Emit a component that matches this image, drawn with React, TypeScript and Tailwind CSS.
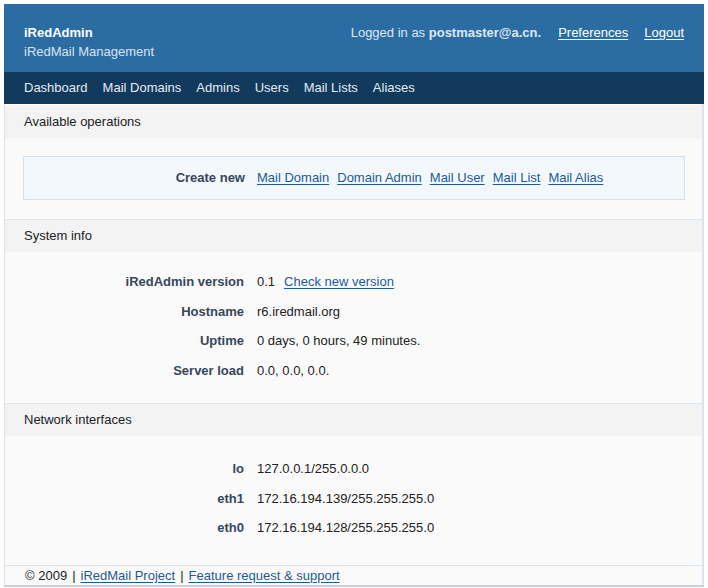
import React from 'react';

const NAV = ['Dashboard', 'Mail Domains', 'Admins', 'Users', 'Mail Lists', 'Aliases'];

const CREATE = ['Mail Domain', 'Domain Admin', 'Mail User', 'Mail List', 'Mail Alias'];

const NETS = [
  { name: 'lo', addr: '127.0.0.1/255.0.0.0' },
  { name: 'eth1', addr: '172.16.194.139/255.255.255.0' },
  { name: 'eth0', addr: '172.16.194.128/255.255.255.0' },
];

function Link({ children }: { children: React.ReactNode }) {
  return <a href="#" className="text-[#1b5a98] underline underline-offset-2">{children}</a>;
}

function Bar({ title, h }: { title: string; h: string }) {
  return (
    <div className={`${h} flex items-center bg-[#f3f3f3] pl-[19px] text-[#222]`}>{title}</div>
  );
}

function Row({ label, children }: { label: string; children: React.ReactNode }) {
  return (
    <div className="flex h-[29.5px] items-center">
      <div className="w-[239px] text-right font-bold text-[#36475a]">{label}</div>
      <div className="pl-[13px] text-[#222]">{children}</div>
    </div>
  );
}

export default function App() {
  return (
    <div className="h-[588px] w-[708px] bg-white pl-[4px] pt-[4px] text-[13px] font-['Liberation_Sans',Arial,sans-serif]">
      <div className="w-[700px]">
        {/* header */}
        <div className="flex h-[68px] justify-between bg-[#2b6ca3] pl-[20px] pr-[20px] pt-[21px]">
          <div>
            <div className="font-bold leading-[16px] text-white">iRedAdmin</div>
            <div className="mt-[3px] leading-[16px] text-[#d8e4ef]">iRedMail Management</div>
          </div>
          <div className="flex gap-[16px] leading-[16px] text-[#dfe8f1]">
            <span>
              Logged in as <b>postmaster@a.cn.</b>
            </span>
            <a href="#" className="ml-[1px] text-white underline underline-offset-2">Preferences</a>
            <a href="#" className="text-white underline underline-offset-2">Logout</a>
          </div>
        </div>
        {/* nav */}
        <div className="flex h-[32px] items-center gap-[15px] bg-[#123a5d] pl-[20px] text-[#e4ebf2]">
          {NAV.map((n) => (
            <span key={n}>{n}</span>
          ))}
        </div>

        <div className="border-l border-r-2 border-[#dde3ea] pt-px">
          <Bar title="Available operations" h="h-[33px]" />
          <div className="bg-[#fafafa] pb-[19px] pl-[18px] pr-[17px] pt-[18px]">
            <div className="flex h-[44px] items-center border border-[#d9e0e7] bg-[#f3f8fc]">
              <div className="w-[221px] text-right font-bold text-[#36475a]">Create new</div>
              <div className="flex gap-[8px] pl-[12px]">
                {CREATE.map((c) => (
                  <Link key={c}>{c}</Link>
                ))}
              </div>
            </div>
          </div>
          <div className="h-px bg-[#dde3ea]" />
          <Bar title="System info" h="h-[32px]" />
          <div className="bg-[#fafafa] pb-[18px] pt-[15px]">
            <Row label="iRedAdmin version">
              0.1<span className="ml-[9px]"><Link>Check new version</Link></span>
            </Row>
            <Row label="Hostname">r6.iredmail.org</Row>
            <Row label="Uptime">0 days, 0 hours, 49 minutes.</Row>
            <Row label="Server load">0.0, 0.0, 0.0.</Row>
          </div>
          <div className="h-px bg-[#dde3ea]" />
          <Bar title="Network interfaces" h="h-[32px]" />
          <div className="bg-[#fafafa] pb-[22.5px] pt-[18px]">
            {NETS.map((n) => (
              <Row key={n.name} label={n.name}>{n.addr}</Row>
            ))}
          </div>
          <div className="h-px bg-[#dde3ea]" />
          <div className="flex h-[19px] items-center gap-[5px] bg-[#fafafa] pl-[20px] text-[#222]">
            <span>© 2009</span>
            <span>|</span>
            <Link>iRedMail Project</Link>
            <span>|</span>
            <Link>Feature request &amp; support</Link>
          </div>
        </div>
        <div className="h-[2px] bg-[#c9ced7]" />
      </div>
    </div>
  );
}
